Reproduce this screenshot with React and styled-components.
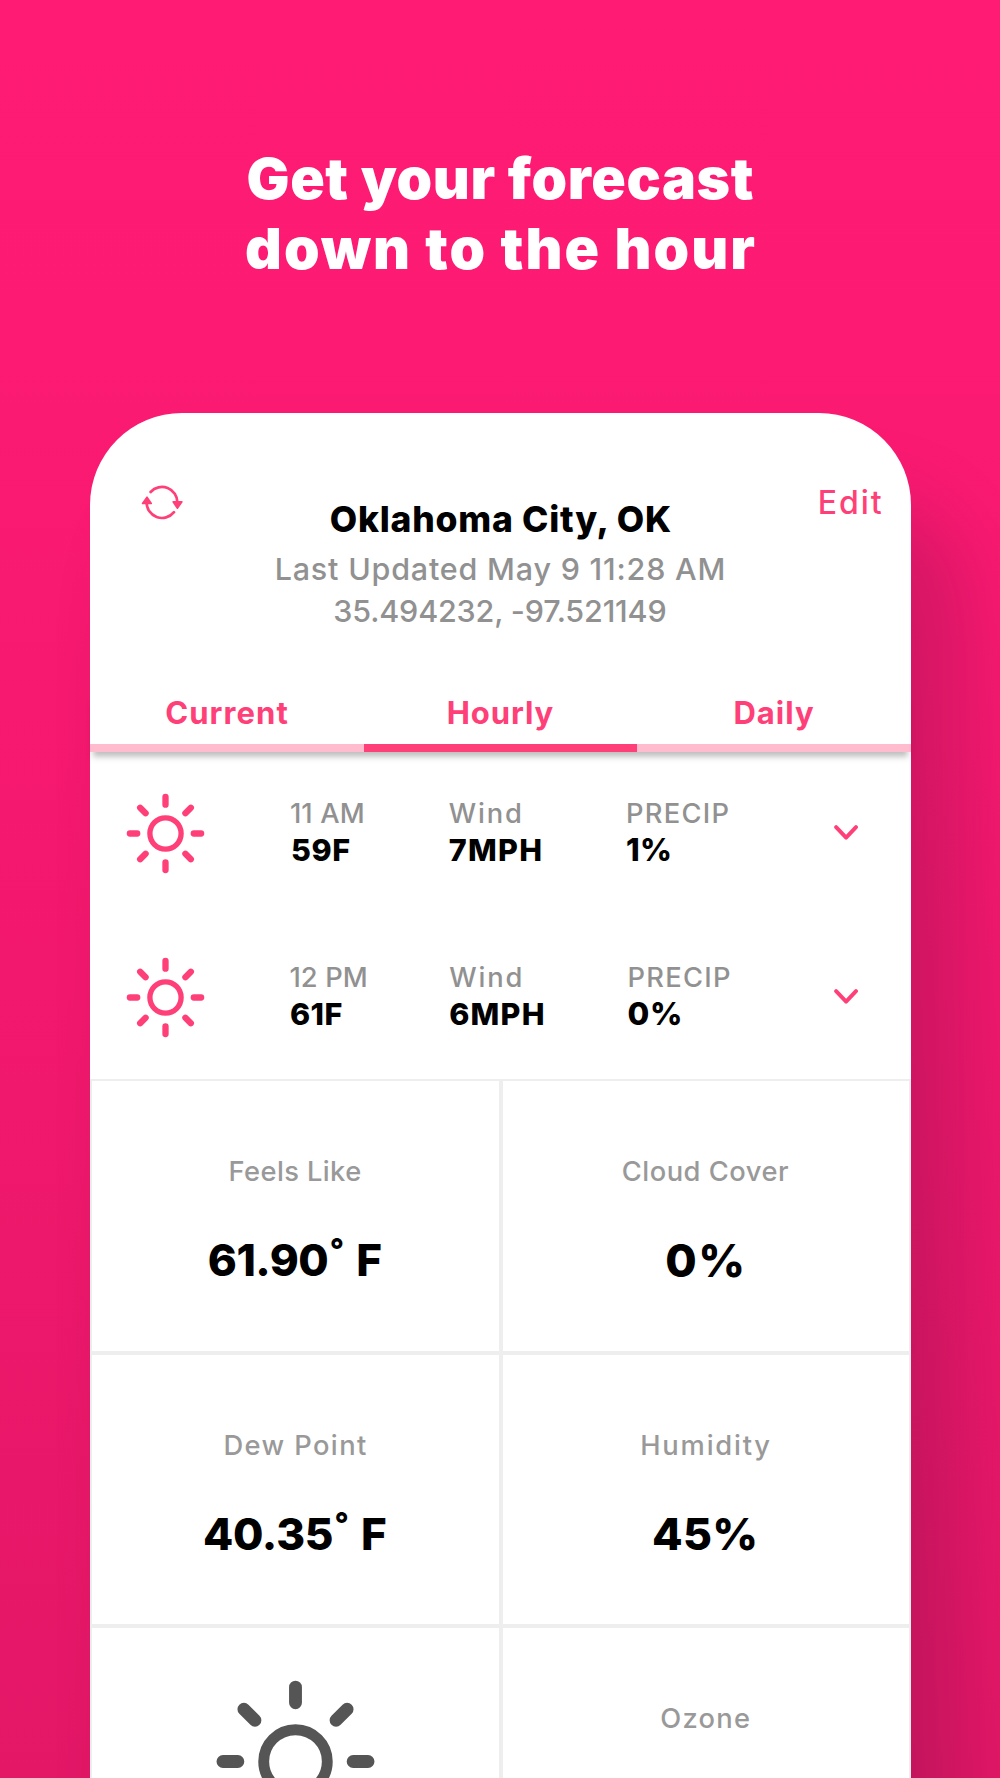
import React from "react";
import styled, { createGlobalStyle } from "styled-components";

const PINK = "#ff4078";

const GlobalStyle = createGlobalStyle`
  *, *::before, *::after { box-sizing: border-box; }
  body {
    margin: 0;
    background: #ff1b73;
    font-family: Inter, "Open Sans", sans-serif;
    -webkit-font-smoothing: antialiased;
  }
`;

const Page = styled.main`
  width: 1000px;
  height: 1778px;
  padding-top: 144px;
  overflow: hidden;
  background: linear-gradient(180deg, #ff1b73 0%, #fc1a72 20%, #f2186d 55%, #e41767 100%);
`;

const Headline = styled.h1`
  margin: 0 0 130px;
  display: flex;
  flex-direction: column;
  align-items: center;
  color: #fff;
  font-size: 57px;
  line-height: 69.5px;
  font-weight: 900;
`;

/* Tracked text drops the spacing after its last letter so it centres on its ink. */
const Text = styled.span`
  display: inline-block;
  white-space: nowrap;
  letter-spacing: ${(p) => p.$track || 0}px;
  margin-right: ${(p) => -(p.$track || 0)}px;
`;

const Card = styled.section`
  width: 820.5px;
  height: 1500px;
  margin-left: 90.25px;
  border-radius: 92px 92px 0 0;
  background: #fff;
  box-shadow: 48px 92px 84px rgba(40, 10, 50, 0.19);
`;

const Header = styled.header`
  display: grid;
  grid-template-columns: 1fr auto 1fr;
  align-items: start;
  height: 280px;
  padding-top: 67px;
`;

const RefreshButton = styled.button`
  justify-self: start;
  margin: 0 0 0 49.5px;
  padding: 0;
  border: 0;
  background: none;
  line-height: 0;
`;

const EditButton = styled.button`
  justify-self: end;
  margin: 3px 29px 0 0;
  padding: 0;
  border: 0;
  background: none;
  color: ${PINK};
  font: 500 32px/40px Inter, sans-serif;
`;

const Place = styled.div`
  display: flex;
  flex-direction: column;
  align-items: center;
  padding-top: 18px;
`;

const City = styled.h2`
  margin: 0 0 6px;
  color: #000;
  font-size: 35.5px;
  line-height: 44px;
  font-weight: 800;
`;

const Meta = styled.p`
  margin: 0;
  padding-right: 1px;
  color: #919191;
  font-size: 30.5px;
  line-height: 41.7px;
  font-weight: 500;
`;

const Tabs = styled.nav`
  position: relative;
  z-index: 1;
  display: grid;
  grid-template-columns: repeat(3, 1fr);
  height: 59px;
  box-shadow: 0 8px 5px -4px rgba(0, 0, 0, 0.17), 0 8px 7px -2px rgba(0, 0, 0, 0.1);
`;

const Tab = styled.div`
  display: flex;
  justify-content: center;
  padding-right: 1px;
  border-bottom: 8px solid ${(p) => (p.$active ? PINK : "#ffbccf")};
  background: #fff;
  color: ${PINK};
  font-size: 31px;
  line-height: 40px;
  font-weight: 700;
`;

const HourList = styled.div`
  margin-top: -1px;
`;

const HourRow = styled.div`
  display: flex;
  align-items: center;
  height: 164.2px;
  padding: 0 53px 0 34.5px;
`;

const SunSlot = styled.div`
  width: ${(p) => p.$width}px;
  line-height: 0;
`;

const Metric = styled.div`
  display: flex;
  flex-direction: column;
  align-items: flex-start;
  width: ${(p) => p.$width}px;
  padding-bottom: 2.4px;
`;

const MetricLabel = styled.div`
  color: #919191;
  font-size: 27.3px;
  line-height: 36px;
  font-weight: 500;
`;

const MetricValue = styled.div`
  padding-left: ${(p) => p.$indent || 0}px;
  color: #000;
  font-size: ${(p) => p.$size || 30.5}px;
  line-height: 36px;
  font-weight: 800;
`;

const ChevronSlot = styled.div`
  margin: 0 0 2px auto;
  line-height: 0;
`;

const DetailGrid = styled.div`
  display: grid;
  grid-template-columns: repeat(2, 1fr);
  grid-auto-rows: 273.3px;
`;

const Cell = styled.div`
  display: flex;
  flex-direction: column;
  align-items: center;
  padding: ${(p) => (p.$icon ? "51.5px 0 0" : "73px 1px 0 0")};
  border: 2px solid #eee;
`;

const CellLabel = styled.div`
  margin-bottom: 44px;
  color: #999;
  font-size: 27.3px;
  line-height: 36px;
  font-weight: 500;
`;

const CellValue = styled.div`
  display: flex;
  align-items: baseline;
  color: #000;
  font-size: ${(p) => p.$size || 44}px;
  line-height: 53px;
  font-weight: 800;
`;

const Degree = styled.sup`
  width: 27.5px;
  padding-left: 1px;
  font-size: 31px;
  line-height: 0;
  vertical-align: baseline;
  transform: translateY(-15px);
`;

function Sun({ size, color }) {
  return (
    <svg width={size} height={size} viewBox="-82 -82 164 164" fill="none" stroke={color} strokeLinecap="round">
      <circle r="31.6" strokeWidth="10.8" />
      <path
        strokeWidth="12.8"
        d="M0-73.9V-58.4M0 58.4V73.9M-72.1 0H-57.3M57.3 0H72.1M-51.3-52-40.3-41M51.3-52 40.3-41M-51.3 52-40.3 41M51.3 52 40.3 41"
      />
    </svg>
  );
}

function Refresh() {
  return (
    <svg width="44" height="44" viewBox="0 0 44 44" fill="none" stroke={PINK} strokeLinecap="round" strokeLinejoin="round">
      <path strokeWidth="2.7" d="M10.6 12A15.4 15.4 0 0 1 37.4 22.5M6.6 22A15.4 15.4 0 0 0 34 32.2" />
      <path fill={PINK} strokeWidth="1.6" d="M33.1 21.9H41.9L37.4 28.2ZM2.5 23.5H11.3L7 17.2Z" />
    </svg>
  );
}

function Chevron() {
  return (
    <svg width="24" height="15" viewBox="0 0 24 15" fill="none" stroke={PINK} strokeWidth="3.9" strokeLinecap="round" strokeLinejoin="round">
      <path d="M2.1 2.1 12.1 12.7 22 2.1" />
    </svg>
  );
}

const HOURS = [
  {
    sunWidth: 165.2,
    metrics: [
      { width: 158.8, label: "11 AM", lt: 0.1, value: "59F", vt: 0.6, indent: 1 },
      { width: 177.2, label: "Wind", lt: 1.9, value: "7MPH", vt: 1.3 },
      { width: 120, label: "PRECIP", lt: 1.3, value: "1%", vt: 0.4, size: 31 },
    ],
  },
  {
    sunWidth: 164.7,
    metrics: [
      { width: 159.8, label: "12 PM", lt: 0.1, value: "61F", vt: 0.5, indent: 0.5 },
      { width: 178.2, label: "Wind", lt: 1.9, value: "6MPH", vt: 1.2 },
      { width: 120, label: "PRECIP", lt: 1.3, value: "0%", vt: 0.8, size: 31.5 },
    ],
  },
];

const DETAILS = [
  { label: "Feels Like", lt: 0.4, value: "61.90", vt: -0.5, degrees: true },
  { label: "Cloud Cover", lt: 0.5, value: "0%", vt: 1.5, size: 45.5 },
  { label: "Dew Point", lt: 1.4, value: "40.35", vt: -0.3, degrees: true },
  { label: "Humidity", lt: 1.8, value: "45%", vt: 0.3, size: 44.5 },
  { icon: true },
  { label: "Ozone", lt: 1.3 },
];

export default function App() {
  return (
    <>
      <GlobalStyle />
      <Page>
        <Headline>
          <Text $track={0.6}>Get your forecast</Text>
          <Text $track={2}>down to the hour</Text>
        </Headline>
        <Card>
          <Header>
            <RefreshButton aria-label="Refresh">
              <Refresh />
            </RefreshButton>
            <Place>
              <City>
                <Text $track={0.75}>Oklahoma City, OK</Text>
              </City>
              <Meta>
                <Text $track={0.8}>Last Updated May 9 11:28 AM</Text>
              </Meta>
              <Meta>
                <Text $track={-0.18}>35.494232, -97.521149</Text>
              </Meta>
            </Place>
            <EditButton>
              <Text $track={2}>Edit</Text>
            </EditButton>
          </Header>
          <Tabs>
            <Tab>
              <Text $track={1.1}>Current</Text>
            </Tab>
            <Tab $active>
              <Text $track={0.9}>Hourly</Text>
            </Tab>
            <Tab>
              <Text $track={1}>Daily</Text>
            </Tab>
          </Tabs>
          <HourList>
            {HOURS.map((hour, i) => (
              <HourRow key={i}>
                <SunSlot $width={hour.sunWidth}>
                  <Sun size={81} color={PINK} />
                </SunSlot>
                {hour.metrics.map((m) => (
                  <Metric key={m.label} $width={m.width}>
                    <MetricLabel>
                      <Text $track={m.lt}>{m.label}</Text>
                    </MetricLabel>
                    <MetricValue $indent={m.indent} $size={m.size}>
                      <Text $track={m.vt}>{m.value}</Text>
                    </MetricValue>
                  </Metric>
                ))}
                <ChevronSlot>
                  <Chevron />
                </ChevronSlot>
              </HourRow>
            ))}
          </HourList>
          <DetailGrid>
            {DETAILS.map((d, i) => (
              <Cell key={i} $icon={d.icon}>
                {d.icon && <Sun size={165} color="#555" />}
                {d.label && (
                  <CellLabel>
                    <Text $track={d.lt}>{d.label}</Text>
                  </CellLabel>
                )}
                {d.value && (
                  <CellValue $size={d.size}>
                    <Text $track={d.vt}>{d.value}</Text>
                    {d.degrees && <Degree>°</Degree>}
                    {d.degrees && <Text>F</Text>}
                  </CellValue>
                )}
              </Cell>
            ))}
          </DetailGrid>
        </Card>
      </Page>
    </>
  );
}
